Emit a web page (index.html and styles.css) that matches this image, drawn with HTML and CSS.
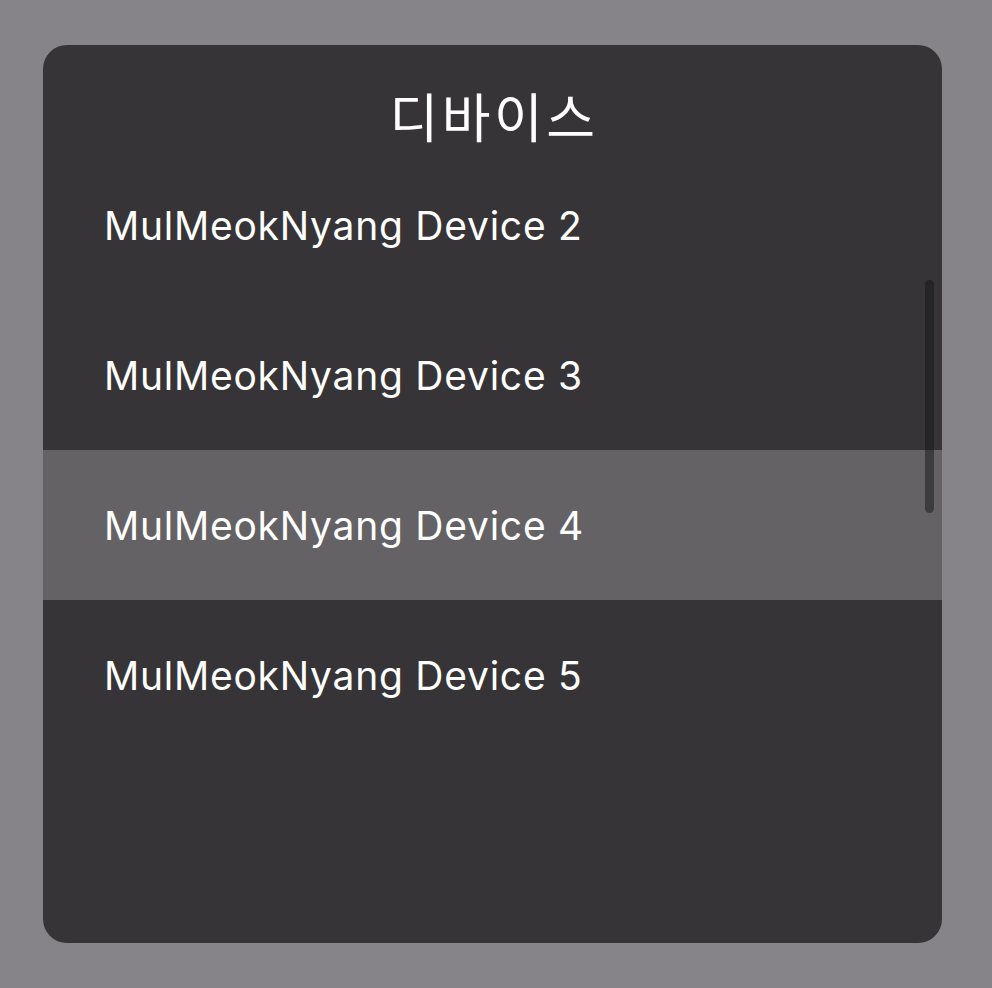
FILE: index.html
```html
<!DOCTYPE html>
<html lang="ko">
<head>
<meta charset="utf-8">
<link rel="stylesheet" href="styles.css">
</head>
<body>
<div class="screen">
  <div class="card">
    <h1 class="title">디바이스</h1>
    <div class="list">
      <div class="row">MulMeokNyang Device 2</div>
      <div class="row">MulMeokNyang Device 3</div>
      <div class="row selected">MulMeokNyang Device 4</div>
      <div class="row">MulMeokNyang Device 5</div>
    </div>
    <div class="scrollbar"></div>
  </div>
</div>
</body>
</html>
```
FILE: styles.css
```css
html, body {
  margin: 0;
  padding: 0;
  background: #868488;
}
.screen {
  width: 992px;
  height: 988px;
  padding: 45px 50px 45px 43px;
  box-sizing: border-box;
}
.card {
  position: relative;
  width: 899px;
  height: 898px;
  background: #363437;
  border-radius: 24px;
  overflow: hidden;
  display: flex;
  flex-direction: column;
}
.title {
  margin: 0;
  height: 105px;
  box-sizing: border-box;
  padding-top: 40px;
  padding-left: 3px;
  text-align: center;
  font-family: "Noto Sans CJK KR", sans-serif;
  font-weight: 400;
  font-size: 53px;
  letter-spacing: 3.5px;
  line-height: 60px;
  color: #ffffff;
}
.list {
  display: flex;
  flex-direction: column;
}
.row {
  height: 150px;
  box-sizing: border-box;
  display: flex;
  align-items: center;
  padding-left: 61px;
  font-family: Inter, "Noto Sans", sans-serif;
  font-size: 39px;
  letter-spacing: 0.75px;
  color: #ffffff;
}
.row.selected {
  background: #646265;
}
.scrollbar {
  position: absolute;
  left: 882px;
  top: 235px;
  width: 9px;
  height: 233px;
  border-radius: 5px;
  background: rgba(20, 19, 21, 0.5);
}
```
